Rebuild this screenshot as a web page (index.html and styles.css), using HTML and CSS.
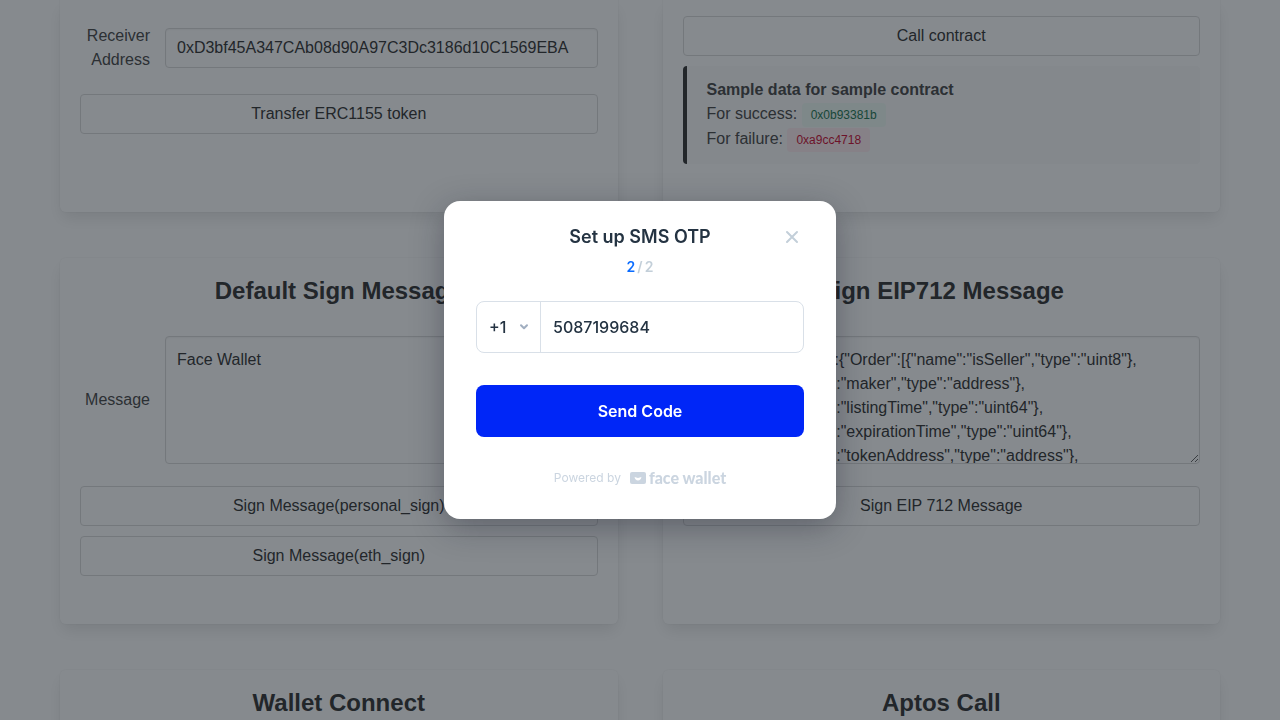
FILE: index.html
```html
<!DOCTYPE html>
<html lang="en">
<head>
<meta charset="utf-8">
<title>Face Wallet</title>
<link rel="stylesheet" href="styles.css">
</head>
<body>
<main class="board">
  <section class="box box-continued">
    <div class="field field-first">
      <label class="label" for="receiver">Receiver Address</label>
      <input class="input" id="receiver" type="text" value="0xD3bf45A347CAb08d90A97C3Dc3186d10C1569EBA">
    </div>
    <div class="buttons">
      <button class="button" type="button">Transfer ERC1155 token</button>
    </div>
  </section>
  <section class="box box-continued">
    <div class="buttons">
      <button class="button" type="button">Call contract</button>
      <div class="message">
        <strong>Sample data for sample contract</strong>
        <div class="sample">For success: <span class="tag tag-success">0x0b93381b</span></div>
        <div class="sample">For failure: <span class="tag tag-danger">0xa9cc4718</span></div>
      </div>
    </div>
  </section>
  <section class="box">
    <h2 class="title">Default Sign Message</h2>
    <div class="field">
      <label class="label" for="message">Message</label>
      <textarea class="input textarea" id="message">Face Wallet</textarea>
    </div>
    <div class="buttons">
      <button class="button" type="button">Sign Message(personal_sign)</button>
      <button class="button" type="button">Sign Message(eth_sign)</button>
    </div>
  </section>
  <section class="box">
    <h2 class="title">Sign EIP712 Message</h2>
    <div class="field">
      <label class="label" for="typed">Message</label>
      <textarea class="input textarea" id="typed">{"types":{"Order":[{"name":"isSeller","type":"uint8"},
{"name":"maker","type":"address"},
{"name":"listingTime","type":"uint64"},
{"name":"expirationTime","type":"uint64"},
{"name":"tokenAddress","type":"address"},</textarea>
    </div>
    <div class="buttons">
      <button class="button" type="button">Sign EIP 712 Message</button>
    </div>
  </section>
  <section class="box">
    <h2 class="title">Wallet Connect</h2>
  </section>
  <section class="box">
    <h2 class="title">Aptos Call</h2>
  </section>
</main>
<div class="overlay">
  <form class="modal" role="dialog" aria-labelledby="modal-title">
    <header class="modal-head">
      <h1 class="modal-title" id="modal-title">Set up SMS OTP</h1>
      <button class="close" type="button" aria-label="Close">
        <svg width="24" height="24" viewBox="0 0 24 24" fill="none" stroke="#c3cfd9" stroke-width="2" stroke-linecap="round"><path d="M7 7 17 17M17 7 7 17"/></svg>
      </button>
    </header>
    <p class="steps"><span class="step-now">2</span><span>/</span><span>2</span></p>
    <div class="phone">
      <div class="code">
        <select class="code-select" aria-label="Country code"><option>+1</option></select>
        <svg class="code-arrow" width="10" height="8" viewBox="0 0 10 8" fill="none" stroke="#a0aec0" stroke-width="2" stroke-linecap="round" stroke-linejoin="round"><path d="M2 2.3 5 5.3 8 2.3"/></svg>
      </div>
      <input class="number" type="tel" aria-label="Phone number" value="5087199684">
    </div>
    <button class="send" type="button">Send Code</button>
    <footer class="powered">
      <span>Powered by</span>
      <span class="brand">
        <svg width="16" height="12" viewBox="0 0 16 12"><rect width="16" height="12" rx="2" fill="#cbd5e0"/><path d="M4.6 5C5.8 5 6.6 6 8 6S10.2 5 11.4 5C11.2 7.2 9.8 8.4 8 8.4S4.8 7.2 4.6 5Z" fill="#fff"/></svg>
        <span class="brand-name">face wallet</span>
      </span>
    </footer>
  </form>
</div>
</body>
</html>
```
FILE: styles.css
```css
* {
  box-sizing: border-box;
}

body {
  margin: 0;
  height: 100vh;
  overflow: hidden;
  background: #fff;
  color: #4a4a4a;
  font: 16px/24px "Liberation Sans", Arial, sans-serif;
}

button,
input,
select,
textarea {
  margin: 0;
  font: inherit;
}

.board {
  display: grid;
  grid-template-columns: 1fr 1fr;
  gap: 46px 45px;
  padding: 0 60px;
}

.box {
  padding: 20px 20px 48px;
  border-radius: 6px;
  background: #fff;
  box-shadow: 0 8px 16px -2px rgba(10, 10, 10, 0.1), 0 0 0 1px rgba(10, 10, 10, 0.02);
}

.box-continued {
  padding-top: 16px;
  border-radius: 0 0 6px 6px;
}

.title {
  margin: 0 0 32px;
  color: #363636;
  font-size: 24px;
  font-weight: 700;
  line-height: 26px;
  text-align: center;
}

.field {
  display: grid;
  grid-template-columns: 70px 1fr;
  align-items: center;
  gap: 15px;
  margin-bottom: 22px;
}

.field-first {
  margin-top: 8px;
}

.label {
  text-align: right;
}

.input {
  width: 100%;
  height: 40px;
  padding: 7px 11px;
  border: 1px solid #dbdbdb;
  border-radius: 4px;
  background: #fff;
  box-shadow: inset 0 1px 2px rgba(10, 10, 10, 0.05);
  color: #363636;
}

.textarea {
  display: block;
  height: 128px;
  padding: 11px;
  resize: vertical;
  scrollbar-width: none;
}

.buttons {
  display: grid;
  gap: 10px;
}

.button {
  height: 40px;
  border: 1px solid #dbdbdb;
  border-radius: 4px;
  background: #fff;
  color: #363636;
}

.message {
  padding: 12px 20px;
  border-left: 4px solid #363636;
  border-radius: 4px;
  background: #fafafa;
}

.message strong {
  display: block;
}

.sample {
  line-height: 24px;
}

.tag {
  display: inline-flex;
  align-items: center;
  height: 24px;
  padding: 0 9px;
  border-radius: 4px;
  font-size: 12px;
  line-height: 18px;
}

.tag-success {
  background: #effaf5;
  color: #257953;
}

.tag-danger {
  background: #feecf0;
  color: #cc0f35;
}

.overlay {
  position: fixed;
  inset: 0;
  display: flex;
  align-items: center;
  justify-content: center;
  background: rgba(13, 21, 29, 0.5);
}

.modal {
  width: 392px;
  padding: 24px 32px 32px;
  border-radius: 16px;
  background: #fff;
  box-shadow: 0 8px 32px rgba(20, 22, 40, 0.35);
  color: #243342;
  font-family: Inter, sans-serif;
}

.modal-head {
  display: grid;
  grid-template-columns: 24px 1fr 24px;
  align-items: center;
}

.modal-title {
  grid-column: 2;
  margin: 0;
  font-size: 18px;
  font-weight: 600;
  line-height: 24px;
  text-align: center;
}

.close {
  display: flex;
  padding: 0;
  border: 0;
  background: none;
}

.steps {
  display: flex;
  justify-content: center;
  gap: 2px;
  margin: 8px 0 24px;
  color: #c3cfd9;
  font-size: 14px;
  font-weight: 600;
  line-height: 20px;
}

.step-now {
  color: #0a6cff;
}

.phone {
  display: flex;
  height: 52px;
  border: 1px solid #d9e0e8;
  border-radius: 8px;
  font-weight: 500;
}

.code {
  position: relative;
  width: 64px;
  border-right: 1px solid #d9e0e8;
}

.code-select {
  width: 100%;
  height: 100%;
  padding: 0 12px;
  border: 0;
  background: none;
  color: inherit;
  appearance: none;
}

.code-arrow {
  position: absolute;
  top: 21px;
  right: 11px;
  pointer-events: none;
}

.number {
  flex: 1;
  min-width: 0;
  padding: 0 12px;
  border: 0;
  background: none;
  color: inherit;
}

.send {
  width: 100%;
  height: 52px;
  margin: 32px 0;
  border: 0;
  border-radius: 8px;
  background: #0026f7;
  color: #fff;
  font-weight: 600;
}

.powered {
  display: flex;
  align-items: center;
  justify-content: center;
  gap: 9px;
  color: #cbd5e0;
  font-size: 12px;
  line-height: 18px;
}

.brand {
  display: flex;
  align-items: center;
  gap: 3px;
}

.brand-name {
  font-family: Lato, sans-serif;
  font-size: 16px;
  font-weight: 900;
}
```
